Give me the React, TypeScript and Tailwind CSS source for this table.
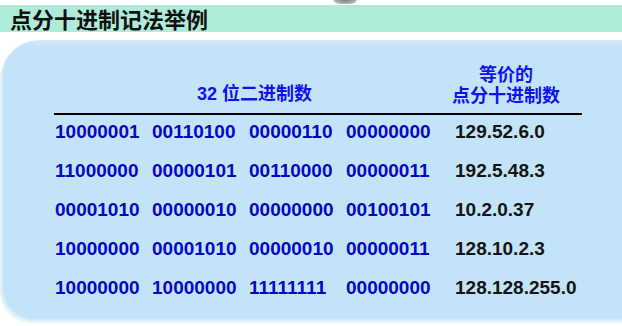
import React from 'react'

const rows = [
  { bin: ['10000001', '00110100', '00000110', '00000000'], dec: '129.52.6.0' },
  { bin: ['11000000', '00000101', '00110000', '00000011'], dec: '192.5.48.3' },
  { bin: ['00001010', '00000010', '00000000', '00100101'], dec: '10.2.0.37' },
  { bin: ['10000000', '00001010', '00000010', '00000011'], dec: '128.10.2.3' },
  { bin: ['10000000', '10000000', '11111111', '00000000'], dec: '128.128.255.0' },
]

const App = () => {
  return (
    <div className="relative w-[622px] h-[326px] overflow-hidden bg-white font-['Liberation_Sans','Noto_Sans_CJK_SC',sans-serif]">
      <div className="absolute left-[333px] top-[-8px] w-[24px] h-[12px] rounded-full bg-[radial-gradient(ellipse_at_center,#6b6b6b_0%,#a8a8a8_60%,#e8e8e8_100%)]" />
      <div className="h-[5px]" />
      <div className="h-[27px] bg-[#aeebd8] pl-[10px] flex items-center">
        <h1 className="text-[22px] leading-[27px] font-bold text-[#111] font-['Noto_Sans_CJK_SC',sans-serif]">点分十进制记法举例</h1>
      </div>
      <div className="mt-[8px] w-[660px] h-[283px] rounded-tl-[40px] rounded-bl-[32px] bg-[linear-gradient(to_bottom,#d3ecfc_0px,#c3e3f8_7px)] shadow-[inset_2px_-3px_3px_rgba(255,255,255,0.65)]">
        <div className="h-[73px] flex items-end pb-[8px] pl-[54px] text-[18px] leading-[22px] font-bold text-[#1212ee]">
          <div className="w-[401px] text-center whitespace-nowrap">32 位二进制数</div>
          <div className="w-[102px] flex flex-col items-center whitespace-nowrap font-['Noto_Sans_CJK_SC',sans-serif]">
            <span className="leading-[21px]">等价的</span>
            <span className="leading-[21px]">点分十进制数</span>
          </div>
        </div>
        <div className="ml-[54px] w-[528px] h-[2px] bg-black" />
        <div className="-mt-[2px] pl-[55px]">
          {rows.map((r, i) => (
            <div key={i} className="h-[39px] flex items-center text-[19px] font-bold whitespace-nowrap">
              {r.bin.map((b, j) => (
                <span key={j} className="w-[97px] text-[#0606c4]">{b}</span>
              ))}
              <span className="ml-[12px] text-[#141414]">{r.dec}</span>
            </div>
          ))}
        </div>
      </div>
    </div>
  )
}

export default App
